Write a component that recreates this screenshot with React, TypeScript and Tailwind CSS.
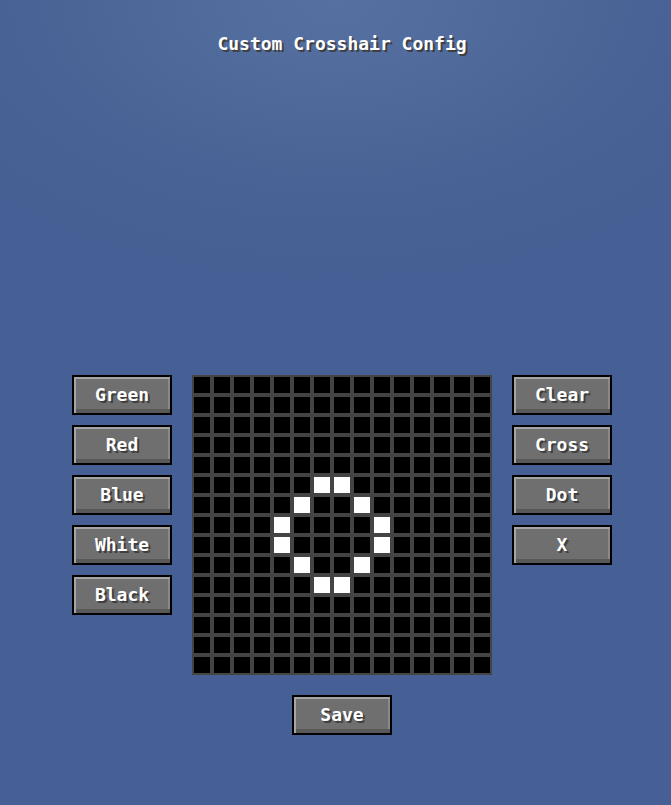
const font = { fontFamily: '"DejaVu Sans Mono", "Liberation Mono", monospace' };

// cellules blanches du motif (anneau)
const lit = new Set([
  "5-6", "5-7",
  "6-5", "6-8",
  "7-4", "7-9",
  "8-4", "8-9",
  "9-5", "9-8",
  "10-6", "10-7",
]);

function McButton({ label }: { label: string }) {
  return (
    <button className="w-[100px] h-[40px] border-2 border-black bg-[#6f6f6f] flex items-center justify-center text-[18px] leading-[20px] font-bold text-white [text-shadow:2px_2px_0_#3f3f3f] [box-shadow:inset_2px_2px_0_#a5a5a5,inset_0_-4px_0_#585858,inset_-2px_0_0_#8a8a8a]">
      {label}
    </button>
  );
}

export default function App() {
  const rows = Array.from({ length: 15 }, (_, r) => r);
  const cols = Array.from({ length: 15 }, (_, c) => c);

  return (
    <div
      className="w-[671px] h-[805px] overflow-hidden flex flex-col bg-[radial-gradient(ellipse_70%_35%_at_50%_0%,#5671a1,#4a6396_65%,#465f94)]"
      style={font}
    >
      <div className="mt-[34px] text-center text-[18px] leading-[20px] font-bold text-white [text-shadow:2px_2px_0_#3f3f3f] pl-[13px]">
        Custom Crosshair Config
      </div>

      <div className="mt-[321px] pl-[72px] flex gap-5">
        <div className="flex flex-col gap-[10px]">
          {["Green", "Red", "Blue", "White", "Black"].map((l) => (
            <McButton key={l} label={l} />
          ))}
        </div>

        <div className="flex flex-col items-center gap-5">
          <div className="grid grid-cols-[repeat(15,20px)] w-[300px] h-[300px]">
            {rows.map((r) =>
              cols.map((c) => (
                <div key={r + "-" + c} className="w-5 h-5 bg-[#444444] p-[2px]">
                  <div className={"w-full h-full " + (lit.has(r + "-" + c) ? "bg-white" : "bg-black")} />
                </div>
              ))
            )}
          </div>
          <McButton label="Save" />
        </div>

        <div className="flex flex-col gap-[10px]">
          {["Clear", "Cross", "Dot", "X"].map((l) => (
            <McButton key={l} label={l} />
          ))}
        </div>
      </div>
    </div>
  );
}
